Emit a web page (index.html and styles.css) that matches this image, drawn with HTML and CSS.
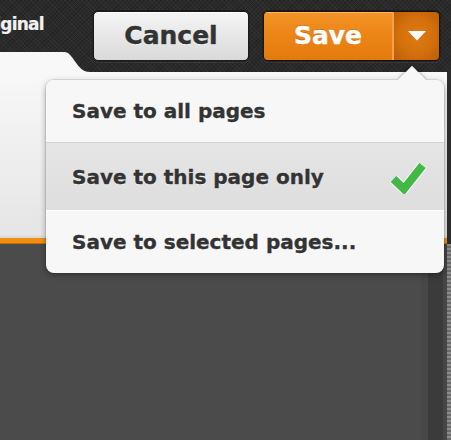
FILE: index.html
```html
<!DOCTYPE html>
<html lang="en">
<head>
<meta charset="utf-8">
<title>Save options</title>
<link rel="stylesheet" href="styles.css">
</head>
<body>
<div class="app">
  <header class="topbar">
    <div class="left">
      <div class="title">Original</div>
      <svg class="tab" width="92" height="20" viewBox="0 0 92 20" aria-hidden="true">
        <path d="M0 0 H64 C74 0 76 20 90 20 H0 Z" fill="#f8f8f8"/>
      </svg>
    </div>
    <div class="actions">
      <button class="btn cancel">Cancel</button>
      <div class="split">
        <button class="btn save">Save</button>
        <button class="btn caret" aria-label="More save options">
          <svg width="18" height="10" viewBox="0 0 18 10" aria-hidden="true">
            <path d="M0 0 H18 L9 9.5 Z" fill="#ffffff"/>
          </svg>
        </button>
      </div>
    </div>
  </header>
  <main class="main">
    <div class="content">
      <div class="panel"></div>
      <div class="accent"></div>
      <div class="canvas">
        <div class="gutter"></div>
        <div class="track"></div>
        <div class="edge"></div>
      </div>
    </div>
    <div class="rail"></div>
    <div class="menu">
      <div class="item first">Save to all pages</div>
      <div class="item active">
        <span>Save to this page only</span>
        <svg class="check" width="36" height="33" viewBox="0 0 36 33" aria-hidden="true">
          <path d="M3.5 18 L14 28 L32.5 4.5" fill="none" stroke="#eef5ec" stroke-width="10.5" stroke-linecap="butt" stroke-linejoin="miter"/>
          <path d="M3.5 18 L14 28 L32.5 4.5" fill="none" stroke="#43b846" stroke-width="8" stroke-linecap="butt" stroke-linejoin="miter"/>
        </svg>
      </div>
      <div class="item last">Save to selected pages...</div>
    </div>
  </main>
</div>
</body>
</html>
```
FILE: styles.css
```css
* { box-sizing: border-box; }

html, body {
  margin: 0;
  padding: 0;
}

body {
  width: 451px;
  height: 440px;
  overflow: hidden;
  background: #2b2b2b;
  font-family: "DejaVu Sans", Verdana, sans-serif;
}

.app {
  display: flex;
  flex-direction: column;
  height: 440px;
}

.topbar {
  height: 72px;
  display: flex;
  background-color: #2a2a2a;
  background-image:
    repeating-linear-gradient(45deg, rgba(255,255,255,0.03) 0 1px, transparent 1px 3px),
    repeating-linear-gradient(-45deg, rgba(0,0,0,0.15) 0 1px, transparent 1px 3px);
}

.left {
  flex: 1;
  display: flex;
  flex-direction: column;
  justify-content: space-between;
  overflow: hidden;
}

.title {
  margin-top: 15px;
  margin-left: -26px;
  font-size: 17px;
  line-height: 19px;
  letter-spacing: -0.8px;
  font-weight: bold;
  color: #f2f2f2;
  white-space: nowrap;
  -webkit-text-stroke: 0.2px #f2f2f2;
}

.tab {
  display: block;
}

.actions {
  display: flex;
  gap: 14px;
  margin-top: 11px;
  margin-right: 11px;
  align-self: flex-start;
}

.btn {
  height: 50px;
  margin: 0;
  padding: 0;
  border: 0;
  font-family: "DejaVu Sans", Verdana, sans-serif;
  font-weight: bold;
  font-size: 25px;
  line-height: 50px;
  cursor: pointer;
}

.cancel {
  width: 156px;
  border: 1px solid #1b1b1b;
  border-radius: 5px;
  color: #333;
  -webkit-text-stroke: 0.4px #333;
  text-shadow: 0 1px 0 rgba(255,255,255,0.85);
  background: linear-gradient(#f5f5f5, #e6e6e6 55%, #d9d9d9);
  box-shadow: inset 0 1px 0 #ffffff, 0 0 0 1px rgba(0,0,0,0.35), 0 1px 0 1px rgba(255,255,255,0.06);
  line-height: 48px;
}

.split {
  width: 177px;
  height: 50px;
  display: flex;
  border: 1px solid #1d1206;
  border-radius: 5px;
  overflow: hidden;
  box-shadow: 0 0 0 1px rgba(0,0,0,0.35), 0 1px 0 1px rgba(255,255,255,0.06);
}

.save {
  flex: 1;
  height: 48px;
  line-height: 48px;
  color: #ffffff;
  -webkit-text-stroke: 0.4px #ffffff;
  text-shadow: 0 -1px 0 rgba(120,60,0,0.35);
  background: linear-gradient(#f39427, #ec8416 50%, #e37a0c);
  border-right: 2px solid #f4a24a;
  box-shadow: inset 0 1px 0 rgba(255,220,170,0.5);
}

.caret {
  width: 45px;
  height: 48px;
  display: flex;
  align-items: center;
  justify-content: center;
  background: radial-gradient(ellipse 70% 70% at 50% 50%, #e07c12 0%, #d36f0c 55%, #b95e08 100%);
}

.caret svg {
  display: block;
  margin-left: 1px;
}

.main {
  position: relative;
  flex: 1;
  display: flex;
}

.content {
  flex: 1;
  display: flex;
  flex-direction: column;
}

.panel {
  height: 166px;
  background: linear-gradient(#f8f8f8, #e5e5e5);
  border-bottom: 2px solid #d7dae3;
}

.accent {
  height: 6px;
  background: #f28f12;
  border-bottom: 1px solid #c56d0c;
}

.canvas {
  flex: 1;
  display: flex;
  justify-content: flex-end;
  background: #4b4b4b;
}

.gutter {
  width: 7px;
  background: #474747;
}

.track {
  width: 15px;
  background: #3b3b3b;
}

.edge {
  width: 4px;
  background: #454545;
}

.rail {
  width: 4px;
  background:
    linear-gradient(#2d2d2d 0 172px, transparent 172px),
    repeating-linear-gradient(#8c8c8c 0 2px, #6a6a6a 2px 4px);
}

.menu {
  position: absolute;
  left: 46px;
  top: 8px;
  width: 398px;
  border-radius: 8px;
  background: #f7f7f7;
  box-shadow: 0 2px 6px rgba(0,0,0,0.35), 0 0 0 1px rgba(0,0,0,0.07);
  z-index: 5;
}

.menu::before {
  content: "";
  position: absolute;
  left: 356px;
  top: -10px;
  width: 20px;
  height: 20px;
  background: #f7f7f7;
  transform: rotate(45deg);
  box-shadow: -1px -1px 3px rgba(0,0,0,0.25);
  z-index: -1;
}

.item {
  display: flex;
  align-items: center;
  justify-content: space-between;
  padding: 0 19px 0 26px;
  font-size: 20px;
  font-weight: bold;
  color: #333333;
  -webkit-text-stroke: 0.35px #333333;
  text-shadow: 0 1px 0 rgba(255,255,255,0.7);
  white-space: nowrap;
}

.first {
  height: 62px;
  background: #f7f7f7;
  border-radius: 8px 8px 0 0;
}

.active {
  height: 68px;
  border-top: 1px solid #d4d4d4;
  background: linear-gradient(#e5e5e5, #dedede);
}

.last {
  height: 63px;
  border-top: 1px solid #ffffff;
  border-radius: 0 0 8px 8px;
}

.check {
  display: block;
  margin-top: 2px;
  margin-right: -1px;
}
```
